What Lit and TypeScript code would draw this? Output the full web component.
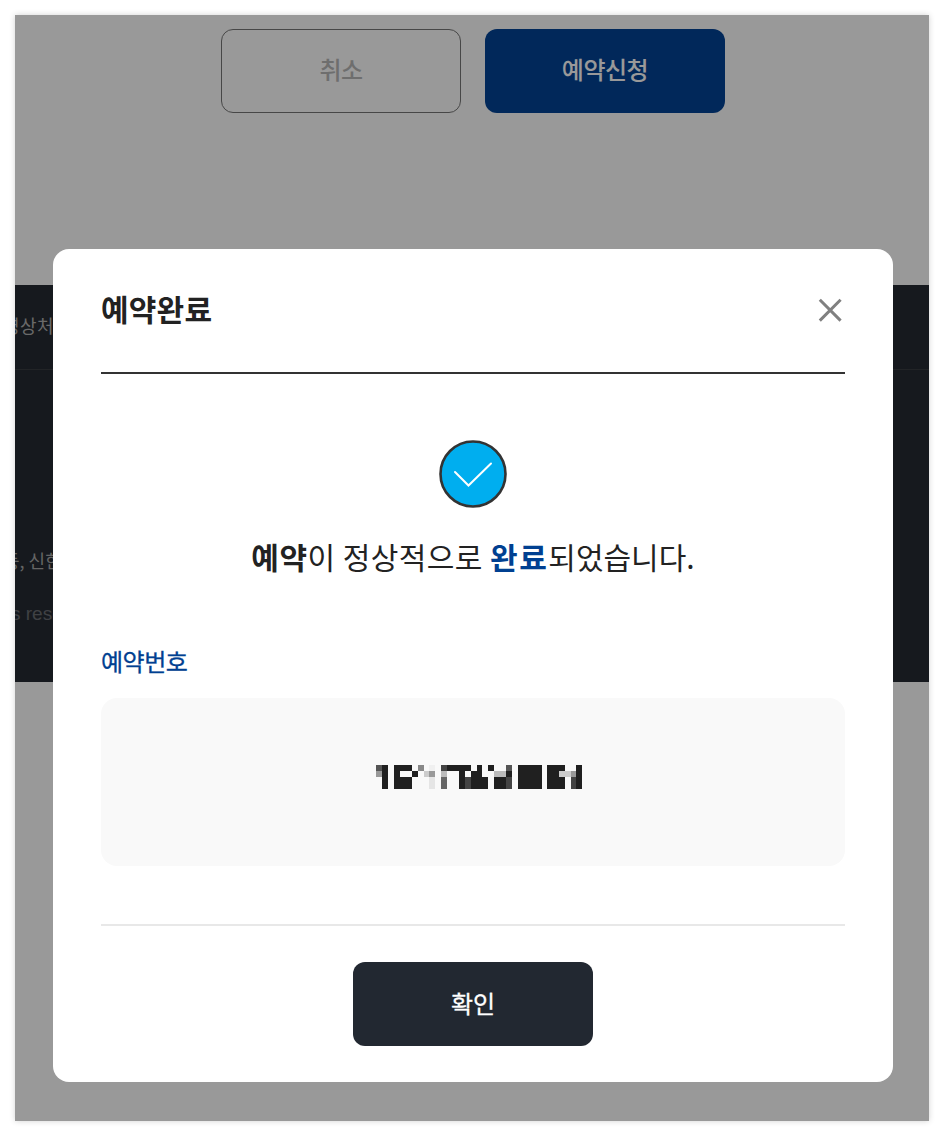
import { LitElement, html, css, svg } from "lit";
import { customElement } from "lit/decorators.js";

const C = "#202020";
const MOSAIC: [number, number, string[]][] = [
  [0, 6, ["#555555", "#999999", "", ""]],
  [6, 6, [C, C, C, C]],
  [18, 6, [C, C, C, C]],
  [24, 12, [C, "", C, C]],
  [36, 6, ["", C, "", ""]],
  [42, 6, ["#888888", "", "", ""]],
  [48, 6, ["", "#cccccc", "", ""]],
  [53, 6, ["#f0f0f0", "#999999", "#e5e5e5", "#e5e5e5"]],
  [65, 6, ["#444444", "#bbbbbb", "#666666", "#666666"]],
  [71, 12, [C, "", "", ""]],
  [83, 6, [C, C, C, C]],
  [89, 6, [C, "", "#444444", "#444444"]],
  [95, 6, ["", C, C, C]],
  [101, 5, [C, C, C, C]],
  [106, 6, ["", "", C, C]],
  [112, 6, [C, "", "", ""]],
  [118, 12, ["", "#bbbbbb", C, C]],
  [130, 6, ["#555555", C, "#444444", "#444444"]],
  [142, 24, [C, C, C, C]],
  [171, 12, [C, C, C, C]],
  [183, 6, [C, "#cccccc", C, C]],
  [189, 6, ["", "#cccccc", "", ""]],
  [195, 5, ["", "#999999", "#444444", "#444444"]],
  [200, 6, [C, C, C, C]],
];

@customElement("app-root")
export class AppRoot extends LitElement {
  static styles = css`
    :host {
      display: block;
      padding: 15px;
      background: #ffffff;
      font-family: "Noto Sans CJK KR", "Noto Sans", sans-serif;
      color: #222222;
    }
    .window {
      position: relative;
      height: 1106px;
      overflow: hidden;
      background: #ffffff;
      box-shadow: 0 0 6px rgba(0, 0, 0, 0.18);
      display: flex;
      flex-direction: column;
    }
    .actions {
      display: flex;
      justify-content: center;
      gap: 24px;
      padding: 14px 0 0 2px;
    }
    .btn {
      width: 240px;
      height: 84px;
      box-sizing: border-box;
      border-radius: 12px;
      display: flex;
      align-items: center;
      justify-content: center;
      font-size: 24px;
      font-weight: 500;
      letter-spacing: -0.5px;
      padding-bottom: 6px;
    }
    .btn.outline {
      border: 1px solid #777777;
      color: #b8b8b8;
      background: #ffffff;
    }
    .btn.solid {
      background: #034396;
      color: #ffffff;
    }
    .footer {
      margin-top: 172px;
      height: 397px;
      background: #262b32;
      color: #b0b0b0;
      font-size: 18px;
      white-space: nowrap;
      overflow: hidden;
    }
    .footer-top {
      height: 80px;
      border-bottom: 1px solid #3a3d42;
      display: flex;
      align-items: center;
      padding-bottom: 4px;
      margin-left: -12px;
      letter-spacing: 0.4px;
    }
    .footer-info {
      margin: 173px 0 0 -12px;
      color: #a8a8a8;
      line-height: 34px;
    }
    .footer-copy {
      margin: 20px 0 0 -4px;
      color: #6a6d72;
      font-family: "Liberation Sans", sans-serif;
      font-size: 19px;
      line-height: 34px;
    }
    .overlay {
      position: absolute;
      inset: 0;
      background: rgba(0, 0, 0, 0.4);
      display: flex;
      justify-content: center;
      align-items: flex-start;
      padding: 234px 0 0 2px;
    }
    .modal {
      width: 840px;
      height: 833px;
      box-sizing: border-box;
      background: #ffffff;
      border-radius: 16px;
      padding: 0 48px;
      display: flex;
      flex-direction: column;
    }
    .head {
      height: 125px;
      box-sizing: border-box;
      border-bottom: 2px solid #333333;
      display: flex;
      align-items: center;
      justify-content: space-between;
      padding-bottom: 2px;
    }
    .title {
      margin: 0 0 4px;
      font-size: 30px;
      font-weight: 700;
      letter-spacing: 0.2px;
      color: #222222;
    }
    .close {
      display: block;
      margin-right: 2px;
    }
    .status {
      display: flex;
      flex-direction: column;
      align-items: center;
      padding-top: 66px;
    }
    .check {
      display: block;
    }
    .msg {
      margin: 26px 0 0;
      font-size: 30px;
      line-height: 44px;
      font-weight: 400;
      letter-spacing: 0.45px;
      color: #222222;
    }
    .msg strong {
      font-weight: 700;
    }
    .msg .blue {
      color: #004091;
      letter-spacing: 1.5px;
    }
    .msg .tail {
      letter-spacing: 0;
    }
    .label {
      margin-top: 65px;
      font-size: 24px;
      line-height: 36px;
      font-weight: 400;
      -webkit-text-stroke: 0.3px #004091;
      color: #004091;
      letter-spacing: -0.5px;
    }
    .box {
      margin-top: 19px;
      height: 168px;
      border-radius: 16px;
      background: #f9f9f9;
      display: flex;
      align-items: center;
      justify-content: center;
    }
    .mosaic {
      display: block;
      margin: 0 0 10px 14px;
    }
    .sep {
      margin-top: 58px;
      height: 2px;
      background: #e8e8e8;
    }
    .confirm-row {
      display: flex;
      justify-content: center;
      padding-top: 36px;
    }
    .confirm {
      width: 240px;
      height: 84px;
      box-sizing: border-box;
      border-radius: 12px;
      background: #222831;
      color: #ffffff;
      display: flex;
      align-items: center;
      justify-content: center;
      font-size: 24px;
      font-weight: 400;
      -webkit-text-stroke: 0.3px #ffffff;
      padding-bottom: 4px;
    }
  `;

  private mosaic() {
    const rects = MOSAIC.flatMap(([x, w, rows]) =>
      rows.map((fill, row) =>
        fill ? svg`<rect x=${x} y=${row * 6} width=${w} height="6" fill=${fill}></rect>` : null
      )
    );
    return html`<svg class="mosaic" width="208" height="24" viewBox="0 0 208 24" shape-rendering="crispEdges" aria-hidden="true">${rects}</svg>`;
  }

  render() {
    return html`
      <div class="window">
        <div class="actions">
          <div class="btn outline">취소</div>
          <div class="btn solid">예약신청</div>
        </div>
        <div class="footer">
          <div class="footer-top">영상처리방침</div>
          <div class="footer-info">등, 신한은행</div>
          <div class="footer-copy">s reserved.</div>
        </div>
        <div class="overlay">
          <div class="modal">
            <div class="head">
              <h2 class="title">예약완료</h2>
              <svg class="close" width="26" height="26" viewBox="0 0 26 26" aria-label="닫기">
                <path d="M2.800 2.800 L23.600 23.600 M23.600 2.800 L2.800 23.600" stroke="#808080" stroke-width="3" fill="none"></path>
              </svg>
            </div>
            <div class="status">
              <svg class="check" width="68" height="68" viewBox="0 0 68 68" aria-hidden="true">
                <circle cx="34" cy="34" r="32.500" fill="#00aeef" stroke="#333333" stroke-width="2.600"></circle>
                <path d="M16 32 L29.500 45.500 L52 23.500" fill="none" stroke="#ffffff" stroke-width="2" stroke-linecap="round" stroke-linejoin="miter"></path>
              </svg>
              <p class="msg"><strong>예약</strong>이 정상적으로 <strong class="blue">완료</strong><span class="tail">되었습니다.</span></p>
            </div>
            <div class="label">예약번호</div>
            <div class="box">${this.mosaic()}</div>
            <div class="sep"></div>
            <div class="confirm-row"><div class="confirm">확인</div></div>
          </div>
        </div>
      </div>
    `;
  }
}
